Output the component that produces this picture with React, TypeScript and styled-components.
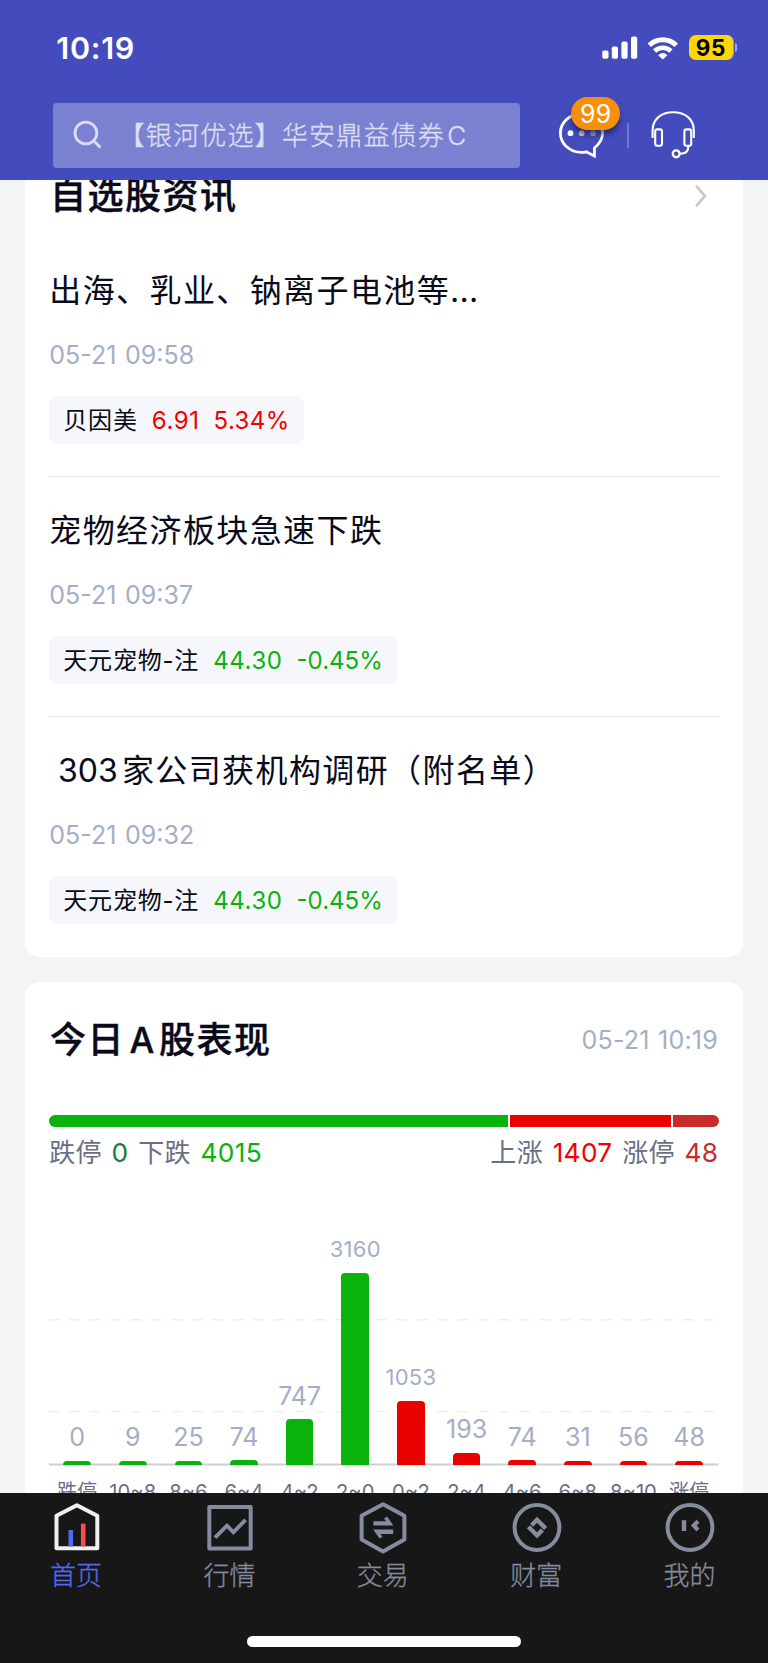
import React from "react";
import styled, { createGlobalStyle } from "styled-components";

const color = {
  brand: "#444bbd",
  page: "#f3f4f6",
  ink: "#090a1a",
  muted: "#a3aec6",
  label: "#697085",
  up: "#eb0000",
  limitUp: "#c92a2a",
  down: "#09b30c",
  limitDown: "#0f8040",
  tab: "#868c9f",
};

const GlobalStyle = createGlobalStyle`
  *, *::before, *::after { box-sizing: border-box; }
  body { margin: 0; background: ${color.page}; }
`;

const Screen = styled.div`
  display: flex;
  flex-direction: column;
  width: 768px;
  height: 1663px;
  overflow: hidden;
  background: ${color.page};
  color: ${color.ink};
  font-family: Inter, "Noto Sans CJK SC", sans-serif;
  white-space: nowrap;
`;

/* ---------- header ---------- */

const Header = styled.header`
  flex: none;
  height: 180px;
  background: ${color.brand};
`;

const StatusBar = styled.div`
  display: flex;
  align-items: center;
  justify-content: space-between;
  height: 95px;
  padding: 0 30.6px 0 56.3px;
`;

const Clock = styled.span`
  margin-top: -1px;
  font-size: 30.5px;
  font-weight: 600;
  letter-spacing: 0.7px;
  color: #fff;
`;

const StatusIcons = styled.div`
  display: flex;
  align-items: center;
`;

const Battery = styled.div`
  display: flex;
  align-items: center;
  gap: 1.2px;
  margin-left: 9.8px;
`;

const BatteryBody = styled.span`
  width: 45px;
  height: 25px;
  border-radius: 7px;
  border-right: 1.6px solid #8f93d8;
  background: #ffd60a;
  color: #000;
  font-size: 22.5px;
  font-weight: 700;
  line-height: 25px;
  letter-spacing: 0.6px;
  text-align: center;
`;

const BatteryCap = styled.span`
  width: 2.4px;
  height: 9px;
  border-radius: 0 3px 3px 0;
  background: #a0a4dd;
`;

const SearchRow = styled.div`
  display: flex;
  align-items: center;
  margin-top: 7.5px;
  padding-left: 53.3px;
`;

const SearchBox = styled.div`
  display: flex;
  align-items: center;
  width: 466.7px;
  height: 65.5px;
  padding-left: 20px;
  border-radius: 4px;
  background: #7b81d1;
`;

const Placeholder = styled.span`
  margin: 2px 0 0 15.3px;
  font-size: 26px;
  font-weight: 300;
  line-height: 40px;
  letter-spacing: 1.2px;
  color: #dcddf4;
  -webkit-text-stroke: 0.35px #dcddf4;
`;

const PlaceholderLatin = styled.span`
  margin-left: 2.2px;
`;

const Messages = styled.div`
  position: relative;
  width: 48px;
  height: 65.5px;
  margin-left: 38px;
`;

const Badge = styled.span`
  position: absolute;
  left: 13.2px;
  top: -6px;
  width: 49px;
  height: 33px;
  border-radius: 17px;
  background: #f58f0c;
  box-shadow: 0 5px 5px rgba(20, 22, 70, 0.55);
  color: #fff;
  font-size: 25px;
  line-height: 34px;
  letter-spacing: 0.2px;
  text-align: center;
`;

const Separator = styled.i`
  width: 2px;
  height: 25px;
  margin: 1px 0 0 20.6px;
  background: #7177ca;
`;

const SupportIcon = styled.svg`
  margin: -3px 0 0 21.8px;
`;

/* ---------- content ---------- */

const Main = styled.main`
  flex: none;
  height: 1313px;
  padding: 0 25px;
  overflow: hidden;
`;

const NewsCard = styled.section`
  height: 777px;
  padding: 0 24.3px;
  border-radius: 0 0 15px 15px;
  background: #fff;
  overflow: hidden;
`;

const NewsHead = styled.div`
  display: flex;
  align-items: center;
  justify-content: space-between;
  height: 44px;
  margin: -6.5px 0 19.5px;
  padding-right: 11.4px;
`;

const CardTitle = styled.h2`
  margin: 0;
  padding-left: 0.6px;
  font-size: 36px;
  font-weight: 500;
  line-height: 44px;
  letter-spacing: 1.5px;
  -webkit-text-stroke: 0.4px currentColor;
`;

const TitleLatin = styled.span`
  margin: 0 4.6px 0 4.6px;
  font-size: 35px;
  letter-spacing: 0;
`;

const NewsItem = styled.article<{ $last?: boolean }>`
  display: flex;
  flex-direction: column;
  align-items: flex-start;
  height: 240px;
  padding-top: 32px;
  border-bottom: 1px solid ${(p) => (p.$last ? "transparent" : "#e9eaed")};
`;

const Headline = styled.h3`
  margin: 0;
  font-size: 32px;
  font-weight: 400;
  line-height: 44px;
  letter-spacing: 1.4px;
`;

const HeadlineNumber = styled.span`
  margin: 0 4px 0 8.6px;
  letter-spacing: 0.1px;
`;

const Dots = styled.span`
  letter-spacing: 0.2px;
`;

const NewsTime = styled.time`
  margin-top: 27px;
  font-size: 25px;
  line-height: 30px;
  word-spacing: 1.6px;
  color: ${color.muted};
`;

const StockChip = styled.div`
  display: flex;
  align-items: center;
  gap: 14px;
  height: 48.5px;
  margin-top: 25.5px;
  padding: 2.6px 14.2px 0 14px;
  border-radius: 8px;
  background: #f6f7fc;
  font-size: 24px;
  line-height: 30px;
`;

const StockName = styled.span`
  letter-spacing: 0.8px;
`;

const Quote = styled.span<{ $up: boolean; $spacing: number }>`
  letter-spacing: ${(p) => p.$spacing}px;
  color: ${(p) => (p.$up ? "#f20000" : color.down)};
`;

const MarketCard = styled.section`
  height: 600px;
  margin-top: 24.5px;
  padding: 34px 24.3px 0;
  border-radius: 15px;
  background: #fff;
`;

const MarketHead = styled.div`
  display: flex;
  align-items: center;
  justify-content: space-between;
  height: 48px;
`;

const MarketTime = styled.time`
  font-size: 25px;
  line-height: 48px;
  letter-spacing: 0.2px;
  word-spacing: 1.2px;
  padding-right: 0.8px;
  color: ${color.muted};
`;

const Ratio = styled.div`
  display: flex;
  gap: 2px;
  height: 12.5px;
  margin-top: 51px;
  border-radius: 7px;
  overflow: hidden;
`;

const RatioPart = styled.span<{ $share: number; $fill: string }>`
  flex: ${(p) => p.$share} 1 0;
  background: ${(p) => p.$fill};
`;

const Totals = styled.div`
  display: flex;
  justify-content: space-between;
  margin-top: 10.4px;
  font-size: 26px;
  line-height: 32px;
  letter-spacing: 0.3px;
  color: ${color.label};
`;

const TotalsSide = styled.div`
  display: flex;
  gap: 9.7px;
  padding-right: 0.4px;
`;

const Count = styled.span<{ $tone: string }>`
  font-size: 26.3px;
  color: ${(p) => p.$tone};
`;

const Plot = styled.div`
  display: grid;
  height: 296.6px;
`;

const GridLines = styled.svg`
  grid-area: 1 / 1;
`;

const Columns = styled.div`
  grid-area: 1 / 1;
  display: grid;
  grid-template-columns: repeat(12, 1fr);
  align-items: end;
  width: 667.6px;
  padding-bottom: 1px;
`;

const Column = styled.div`
  display: flex;
  flex-direction: column;
  align-items: center;
`;

const Value = styled.span<{ $small: boolean }>`
  margin-bottom: 9.6px;
  font-size: ${(p) => (p.$small ? 22 : 25)}px;
  letter-spacing: ${(p) => (p.$small ? 0.3 : 0)}px;
  line-height: 28px;
  color: ${color.muted};
`;

const Bar = styled.i<{ $fill: string }>`
  width: 27.7px;
  border-radius: 4px 4px 0 0;
  background: ${(p) => p.$fill};
`;

const Axis = styled.div`
  display: grid;
  grid-template-columns: repeat(12, 1fr);
  width: 667.6px;
  margin-top: 14px;
  color: ${color.label};
  font-size: 20.2px;
  line-height: 24px;
  text-align: center;
`;

/* ---------- tab bar ---------- */

const TabBar = styled.nav`
  flex: none;
  display: flex;
  flex-direction: column;
  align-items: center;
  height: 170px;
  background: #171717;
`;

const Tabs = styled.div`
  display: grid;
  grid-template-columns: repeat(5, 1fr);
  align-self: flex-start;
  width: 767px;
  height: 143.3px;
  padding-top: 6px;
`;

const Tab = styled.div<{ $active?: boolean }>`
  display: flex;
  flex-direction: column;
  align-items: center;
  gap: 3.4px;
  font-size: 26px;
  font-weight: 300;
  line-height: 36px;
  color: ${(p) => (p.$active ? "#5468ee" : color.tab)};
  -webkit-text-stroke: 0.3px currentColor;
`;

const TabLabel = styled.span`
  padding-right: 1.4px;
`;

const HomeIndicator = styled.span`
  width: 274.5px;
  height: 10.3px;
  border-radius: 6px;
  background: #fff;
`;

/* ---------- data ---------- */

type Stock = { name: string; price: string; change: string; up: boolean };
type News = { title: React.ReactNode; time: string; stock: Stock };

const tianyuan: Stock = { name: "天元宠物-注", price: "44.30", change: "-0.45%", up: false };

const news: News[] = [
  {
    title: <>出海、乳业、钠离子电池等<Dots>...</Dots></>,
    time: "05-21 09:58",
    stock: { name: "贝因美", price: "6.91", change: "5.34%", up: true },
  },
  { title: "宠物经济板块急速下跌", time: "05-21 09:37", stock: tianyuan },
  {
    title: <><HeadlineNumber>303</HeadlineNumber>家公司获机构调研（附名单）</>,
    time: "05-21 09:32",
    stock: tianyuan,
  },
];

const distribution = [
  { range: "跌停", count: 0, height: 4.3 },
  { range: "10~8", count: 9, height: 4.3 },
  { range: "8~6", count: 25, height: 4.3 },
  { range: "6~4", count: 74, height: 4.9 },
  { range: "4~2", count: 747, height: 45.6 },
  { range: "2~0", count: 3160, height: 192.3 },
  { range: "0~2", count: 1053, height: 64.3 },
  { range: "2~4", count: 193, height: 12.2 },
  { range: "4~6", count: 74, height: 4.9 },
  { range: "6~8", count: 31, height: 4.3 },
  { range: "8~10", count: 56, height: 4.3 },
  { range: "涨停", count: 48, height: 4.3 },
];

/* ---------- icons ---------- */

const Signal = () => (
  <svg width="36" height="23" viewBox="0 0 36 23" fill="#fff">
    <rect x="0.3" y="14.4" width="6.2" height="8.4" rx="1.8" />
    <rect x="9.8" y="10.4" width="6.2" height="12.4" rx="1.8" />
    <rect x="19.4" y="5.4" width="6.2" height="17.4" rx="1.8" />
    <rect x="29" y="0.6" width="6.2" height="22.2" rx="1.8" />
  </svg>
);

const WifiIcon = styled.svg`
  margin-left: 9.5px;
`;

const Wifi = () => (
  <WifiIcon width="32" height="24" viewBox="0 0 32 24" fill="none" stroke="#fff">
    <path d="M2.3 9.2 A19.6 19.6 0 0 1 29.3 9.2" strokeWidth="5" />
    <path d="M7.6 15 A11.8 11.8 0 0 1 24 15" strokeWidth="4.6" />
    <path d="M11.2 19.2 Q15.8 15 20.4 19.2 L15.8 23.6Z" fill="#fff" stroke="none" />
  </WifiIcon>
);

const SearchIcon = () => (
  <svg width="30" height="30" viewBox="0 0 30 30" fill="none" stroke="#dcddf4" strokeWidth="2.8" strokeLinecap="round">
    <circle cx="12.9" cy="13" r="10.9" />
    <path d="M20.8 20.8 L26.6 26.8" />
  </svg>
);

const ChatIcon = () => (
  <svg width="48" height="66" viewBox="0 0 48 66" fill="none" stroke="#fff" strokeWidth="2.8">
    <path d="M36.4 45 C41 41.2 44.6 35.8 44.6 30 C44.6 19 35 11 23.5 11 C12 11 2.4 19 2.4 30 C2.4 41 12 49.4 23.5 49.4 C25.2 49.4 26.8 49.2 28.2 48.8 L36.4 53Z" />
    <g fill="#fff" stroke="none">
      <circle cx="12.5" cy="30.2" r="2.9" />
      <circle cx="23.7" cy="30.2" r="2.9" fill="#d0d1e4" />
      <circle cx="35" cy="30.2" r="2.9" fill="#a4a6c0" />
    </g>
  </svg>
);

const Headset = () => (
  <SupportIcon width="46" height="50" viewBox="0 0 46 50" fill="none" stroke="#fff" strokeWidth="2.1">
    <path d="M2.6 29 V22 C2.6 10 11 3.2 23.2 3.2 C35.4 3.2 43.8 10 43.8 22 V29" />
    <rect x="5.2" y="20.4" width="6.8" height="16.4" rx="2" />
    <rect x="34.4" y="20.4" width="6.8" height="16.4" rx="2" />
    <path d="M38.4 37 C38.4 42.4 35.4 44.8 30.2 44.8" />
    <circle cx="26.2" cy="44.8" r="3.4" strokeWidth="2.4" />
  </SupportIcon>
);

const Chevron = () => (
  <svg width="12" height="22" viewBox="0 0 12 22" fill="none" stroke="#c8c9ce" strokeWidth="2.7" strokeLinecap="round">
    <path d="M1.8 1.6 L9.9 11 L1.8 20.4" />
  </svg>
);

const tabIcon = { width: 56, height: 56, viewBox: "0 0 56 56", fill: "none", stroke: color.tab, strokeWidth: 4 };

const HomeIcon = () => (
  <svg {...tabIcon} stroke="#efeff4" strokeLinejoin="round">
    <path d="M7.5 49.2 V16.8 L27.9 6.2 L48.3 16.8 V49.2Z" />
    <path d="M21.8 31 V47.4" stroke="#5468ee" strokeWidth="4.6" />
    <path d="M34.2 24.6 V47.4" stroke="#f64d52" strokeWidth="4.6" />
  </svg>
);

const QuotesIcon = () => (
  <svg {...tabIcon}>
    <rect x="7.3" y="8" width="41.4" height="41.4" strokeLinejoin="round" />
    <path d="M13 38.6 L25 26.6 L31.4 33.2 L43.6 20.8" strokeWidth="3.8" />
  </svg>
);

const TradeIcon = () => (
  <svg {...tabIcon} strokeLinejoin="round">
    <path d="M28 5.2 L49.4 16.8 V40.6 L28 52.4 L6.6 40.6 V16.8Z" />
    <g fill={color.tab} stroke="none">
      <path d="M18.4 22.3 H31.2 L29 19.4 L32 17.6 L38.4 26.6 H18.4Z" />
      <path d="M38.2 34.9 H25.4 L27.6 37.8 L24.6 39.6 L18.2 30.6 H38.2Z" />
    </g>
  </svg>
);

const WealthIcon = () => (
  <svg {...tabIcon}>
    <circle cx="28" cy="28.5" r="22.4" />
    <path d="M22.6 26.2 L28 20.8 L36.6 29.4" strokeWidth="4.4" />
    <path d="M33.4 31 L28 36.4 L19.4 27.8" strokeWidth="4.4" />
  </svg>
);

const ProfileIcon = () => (
  <svg {...tabIcon}>
    <circle cx="28" cy="28.5" r="22.4" />
    <path d="M22 21.2 V32" strokeWidth="4.4" />
    <path d="M36 22.2 L31.8 26.6 L36 31" strokeWidth="4.2" />
  </svg>
);

const tabs = [
  { label: "首页", icon: <HomeIcon />, active: true },
  { label: "行情", icon: <QuotesIcon /> },
  { label: "交易", icon: <TradeIcon /> },
  { label: "财富", icon: <WealthIcon /> },
  { label: "我的", icon: <ProfileIcon /> },
];

export default function App() {
  return (
    <>
      <GlobalStyle />
      <Screen>
        <Header>
          <StatusBar>
            <Clock>10:19</Clock>
            <StatusIcons>
              <Signal />
              <Wifi />
              <Battery>
                <BatteryBody>95</BatteryBody>
                <BatteryCap />
              </Battery>
            </StatusIcons>
          </StatusBar>
          <SearchRow>
            <SearchBox>
              <SearchIcon />
              <Placeholder>
                【银河优选】华安鼎益债券<PlaceholderLatin>C</PlaceholderLatin>
              </Placeholder>
            </SearchBox>
            <Messages>
              <ChatIcon />
              <Badge>99</Badge>
            </Messages>
            <Separator />
            <Headset />
          </SearchRow>
        </Header>

        <Main>
          <NewsCard>
            <NewsHead>
              <CardTitle>自选股资讯</CardTitle>
              <Chevron />
            </NewsHead>
            {news.map(({ title, time, stock }, i) => (
              <NewsItem key={time} $last={i === news.length - 1}>
                <Headline>{title}</Headline>
                <NewsTime>{time}</NewsTime>
                <StockChip>
                  <StockName>{stock.name}</StockName>
                  <Quote $up={stock.up} $spacing={0.6}>{stock.price}</Quote>
                  <Quote $up={stock.up} $spacing={stock.up ? 0.4 : 0}>{stock.change}</Quote>
                </StockChip>
              </NewsItem>
            ))}
          </NewsCard>

          <MarketCard>
            <MarketHead>
              <CardTitle>今日<TitleLatin>A</TitleLatin>股表现</CardTitle>
              <MarketTime>05-21 10:19</MarketTime>
            </MarketHead>
            <Ratio>
              <RatioPart $share={459.2} $fill={color.down} />
              <RatioPart $share={161} $fill={color.up} />
              <RatioPart $share={46} $fill={color.limitUp} />
            </Ratio>
            <Totals>
              <TotalsSide>
                <span>跌停</span>
                <Count $tone={color.limitDown}>0</Count>
                <span>下跌</span>
                <Count $tone={color.down}>4015</Count>
              </TotalsSide>
              <TotalsSide>
                <span>上涨</span>
                <Count $tone="#f20000">1407</Count>
                <span>涨停</span>
                <Count $tone={color.limitUp}>48</Count>
              </TotalsSide>
            </Totals>
            <Plot>
              <GridLines width="669.4" height="296.6" fill="none">
                <path d="M0 150.8 H668 M0 242.6 H668" stroke="#eeeeef" strokeWidth="1.4" strokeDasharray="10.4 10.05" />
                <path d="M0 295.6 H669.4" stroke="#cdced6" strokeWidth="2" />
              </GridLines>
              <Columns>
                {distribution.map((d) => (
                  <Column key={d.range}>
                    <Value $small={d.count > 999}>{d.count}</Value>
                    <Bar
                      $fill={distribution.indexOf(d) < 6 ? color.down : color.up}
                      style={{ height: d.height }}
                    />
                  </Column>
                ))}
              </Columns>
            </Plot>
            <Axis>
              {distribution.map((d) => (
                <span key={d.range}>{d.range}</span>
              ))}
            </Axis>
          </MarketCard>
        </Main>

        <TabBar>
          <Tabs>
            {tabs.map((t) => (
              <Tab key={t.label} $active={t.active}>
                {t.icon}
                <TabLabel>{t.label}</TabLabel>
              </Tab>
            ))}
          </Tabs>
          <HomeIndicator />
        </TabBar>
      </Screen>
    </>
  );
}
